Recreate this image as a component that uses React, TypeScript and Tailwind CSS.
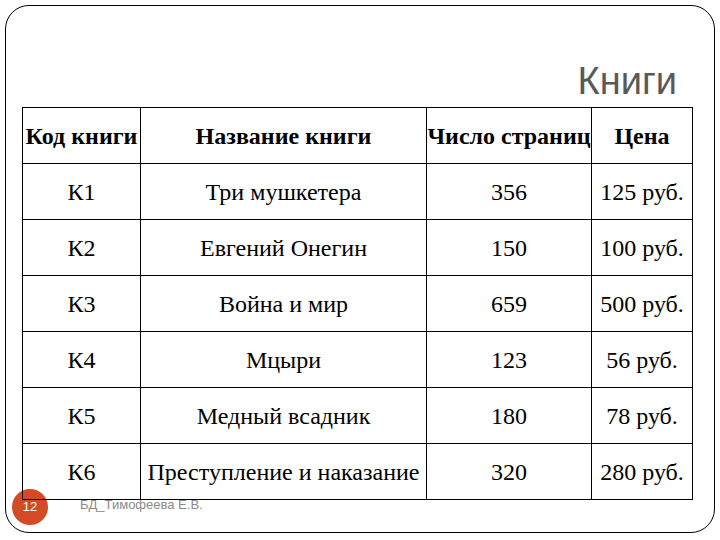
import React from "react";

const rows = [
  ["К1", "Три мушкетера", "356", "125 руб."],
  ["К2", "Евгений Онегин", "150", "100 руб."],
  ["К3", "Война и мир", "659", "500 руб."],
  ["К4", "Мцыри", "123", "56 руб."],
  ["К5", "Медный всадник", "180", "78 руб."],
  ["К6", "Преступление и наказание", "320", "280 руб."],
];

const headers = ["Код книги", "Название книги", "Число страниц", "Цена"];

export default function App() {
  return (
    <div className="w-[720px] h-[540px] bg-white pl-[5px] pt-[5px] overflow-hidden">
      <div className="w-[710px] h-[528px] border border-black rounded-[24px] flex flex-col">
        <div className="pt-[56px] pr-[37px] flex justify-end">
          <span
            className="text-[38px] leading-[38px] text-[#595959]"
            style={{ fontFamily: '"Liberation Sans", Arial, sans-serif' }}
          >
            Книги
          </span>
        </div>
        <div
          className="ml-[16px] mt-[7px] w-[671px] grid grid-cols-[118px_286px_165px_101px] border-l border-t border-black text-black text-[24px] leading-none relative z-10"
          style={{ fontFamily: '"Liberation Serif", "Times New Roman", serif' }}
        >
          {headers.map((h) => (
            <div
              key={h}
              className="h-[56px] border-r border-b border-black flex items-center justify-center font-bold whitespace-nowrap"
            >
              {h}
            </div>
          ))}
          {rows.map((r) =>
            r.map((c, i) => (
              <div
                key={r[0] + i}
                className="h-[56px] border-r border-b border-black flex items-center justify-center whitespace-nowrap"
              >
                {c}
              </div>
            ))
          )}
        </div>
        <div
          className="-mt-[11px] ml-[6px] flex items-center"
          style={{ fontFamily: '"Liberation Sans", Arial, sans-serif' }}
        >
          <div className="w-[36px] h-[36px] rounded-full bg-[#d34a24] flex items-center justify-center text-white text-[13px]">
            12
          </div>
          <span className="ml-[32px] -mt-[4px] text-[13px] text-[#8a8a8a]">БД_Тимофеева Е.В.</span>
        </div>
      </div>
    </div>
  );
}
